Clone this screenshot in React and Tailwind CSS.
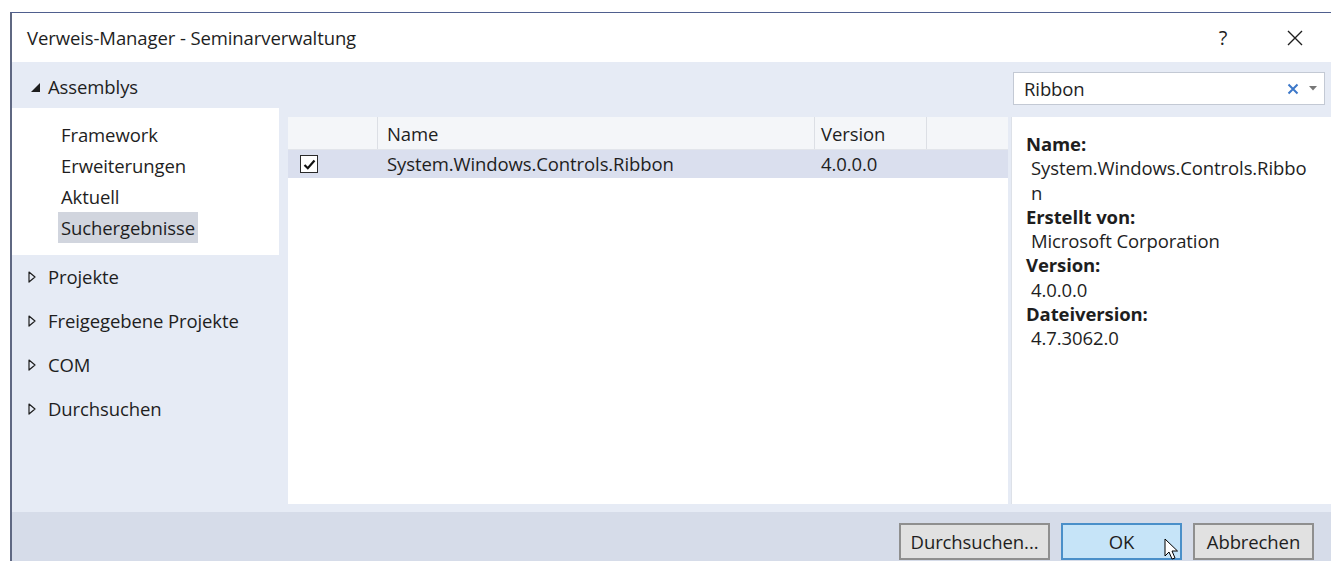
import React from "react";

const ExpandedArrow = () => (
  <svg width="11" height="11" viewBox="0 0 11 11" className="shrink-0">
    <path d="M10 1 L10 10 L1 10 Z" fill="#1e1e1e" />
  </svg>
);

const CollapsedArrow = () => (
  <svg width="8" height="12" viewBox="0 0 8 12" className="shrink-0">
    <path d="M1 1 L7 6 L1 11 Z" fill="none" stroke="#1e1e1e" strokeWidth="1.2" strokeLinejoin="round" />
  </svg>
);

const navItems = ["Framework", "Erweiterungen", "Aktuell", "Suchergebnisse"];
const groups = ["Projekte", "Freigegebene Projekte", "COM", "Durchsuchen"];

const details = [
  ["Name:", ["System.Windows.Controls.Ribbo", "n"]],
  ["Erstellt von:", ["Microsoft Corporation"]],
  ["Version:", ["4.0.0.0"]],
  ["Dateiversion:", ["4.7.3062.0"]],
];

export default function App() {
  return (
    <div className="w-[1331px] h-[561px] bg-white pt-[12px] pl-[10px] overflow-hidden font-['Open_Sans',sans-serif] text-[#1e1e1e] text-[18.5px] tracking-[-0.1px]">
      <div className="relative h-full flex flex-col border-t border-t-[#4f5f8e] border-l-2 border-l-[#5f6882]">
        {/* title bar */}
        <div className="h-[49px] bg-white flex items-center shrink-0">
          <div className="pl-[15px] flex-1">Verweis-Manager - Seminarverwaltung</div>
          <div className="w-[20px] text-center text-[20px] mr-[54px]">?</div>
          <svg width="16" height="16" viewBox="0 0 16 16" className="mr-[28px]">
            <path d="M1 1 L15 15 M15 1 L1 15" stroke="#1e1e1e" strokeWidth="1.4" />
          </svg>
        </div>

        {/* body */}
        <div className="flex-1 bg-[#e6ebf5] flex">
          {/* navigation */}
          <div className="w-[276px] shrink-0 flex flex-col">
            <div className="h-[46px] flex items-center pl-[18px] pt-[4px] gap-[7px]">
              <ExpandedArrow />
              <span>Assemblys</span>
            </div>
            <div className="bg-white w-[267px] h-[147px] pt-[11px] pl-[49px] flex flex-col">
              {navItems.map((t) => (
                <div
                  key={t}
                  className={
                    "h-[31px] flex items-center w-fit px-[3px] -ml-[3px] " +
                    (t === "Suchergebnisse" ? "bg-[#d1d5de]" : "")
                  }
                >
                  {t}
                </div>
              ))}
            </div>
            <div className="flex flex-col">
              {groups.map((g) => (
                <div key={g} className="h-[44px] flex items-center pl-[16px] gap-[12px]">
                  <CollapsedArrow />
                  <span>{g}</span>
                </div>
              ))}
            </div>
          </div>

          {/* main area */}
          <div className="flex-1 flex flex-col">
            <div className="h-[55px] flex items-start justify-end pt-[10px] pr-[6px]">
              <div className="w-[312px] h-[33px] bg-white border border-[#c3c9d4] flex items-center pl-[10px] pr-[7px]">
                <span className="flex-1">Ribbon</span>
                <svg width="12" height="12" viewBox="0 0 12 12" className="mr-[10px]">
                  <path d="M1.5 1.5 L10.5 10.5 M10.5 1.5 L1.5 10.5" stroke="#3d78c9" strokeWidth="2" />
                </svg>
                <svg width="8" height="5" viewBox="0 0 8 5">
                  <path d="M0 0 L8 0 L4 4.5 Z" fill="#777" />
                </svg>
              </div>
            </div>
            <div className="flex-1 flex gap-[3px] pb-[8px]">
              {/* reference list */}
              <div className="w-[720px] bg-white flex flex-col">
                <div className="h-[33px] flex bg-[#f4f6f9] border-b border-[#e2e5eb]">
                  <div className="w-[90px] border-r border-[#dcdfe5]" />
                  <div className="w-[437px] border-r border-[#dcdfe5] pl-[9px] pt-[1px] flex items-center">Name</div>
                  <div className="w-[112px] border-r border-[#dcdfe5] pl-[6px] pt-[1px] flex items-center">Version</div>
                  <div className="flex-1" />
                </div>
                <div className="h-[28px] flex items-center bg-[#dadfee]">
                  <div className="w-[90px] pl-[12px] flex items-center">
                    <div className="w-[18px] h-[18px] border border-[#2a2a2a] bg-white flex items-center justify-center">
                      <svg width="13" height="11" viewBox="0 0 13 11">
                        <path d="M1.5 6 L4.8 9.2 L11.5 1.5" fill="none" stroke="#111" strokeWidth="2.2" />
                      </svg>
                    </div>
                  </div>
                  <div className="w-[437px] pl-[9px]">System.Windows.Controls.Ribbon</div>
                  <div className="w-[112px] pl-[6px]">4.0.0.0</div>
                </div>
              </div>
              {/* details */}
              <div className="flex-1 bg-white border-l border-[#dde1e8] pl-[14px] pt-[15px] leading-[24.3px] whitespace-nowrap">
                {details.map(([label, vals]) => (
                  <div key={label}>
                    <div className="font-bold">{label}</div>
                    {vals.map((v) => (
                      <div key={v} className="pl-[5px]">{v}</div>
                    ))}
                  </div>
                ))}
              </div>
            </div>
          </div>
        </div>

        {/* footer buttons */}
        <div className="h-[49px] shrink-0 bg-[#d6dce9] flex items-start justify-end pt-[11px] pr-[17px] gap-[11px]">
          <div className="w-[151px] h-[37px] bg-[#e1e1e1] border-2 border-[#8f8f8f] flex items-center justify-center">Durchsuchen...</div>
          <div className="w-[121px] h-[37px] bg-[#c6e4f8] border-2 border-[#4a8fc9] flex items-center justify-center">OK</div>
          <div className="w-[121px] h-[37px] bg-[#e1e1e1] border-2 border-[#8f8f8f] flex items-center justify-center">Abbrechen</div>
        </div>

        {/* mouse pointer over OK */}
        <svg width="16" height="24" viewBox="0 0 16 24" className="absolute left-[1152px] top-[525px]">
          <path d="M1 1 L1 18 L5 14 L8 21 L11 20 L8 13 L13.5 13 Z" fill="#fff" stroke="#000" strokeWidth="1" strokeLinejoin="round" />
        </svg>
      </div>
    </div>
  );
}
